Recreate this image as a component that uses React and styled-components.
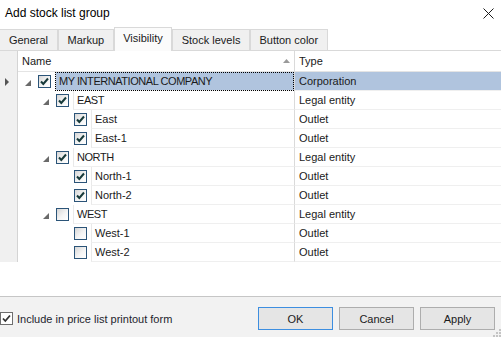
import React from "react";
import styled, { createGlobalStyle } from "styled-components";

const GlobalStyle = createGlobalStyle`
  html, body {
    margin: 0;
    padding: 0;
    background: #ffffff;
  }
  body {
    font-family: "Liberation Sans", Arial, sans-serif;
    font-size: 11px;
    color: #1a1a1a;
  }
`;

const rows = [
  { name: "MY INTERNATIONAL COMPANY", type: "Corporation", level: 0, checked: true, group: true, selected: true },
  { name: "EAST", type: "Legal entity", level: 1, checked: true, group: true },
  { name: "East", type: "Outlet", level: 2, checked: true },
  { name: "East-1", type: "Outlet", level: 2, checked: true },
  { name: "NORTH", type: "Legal entity", level: 1, checked: true, group: true },
  { name: "North-1", type: "Outlet", level: 2, checked: true },
  { name: "North-2", type: "Outlet", level: 2, checked: true },
  { name: "WEST", type: "Legal entity", level: 1, checked: false, group: true },
  { name: "West-1", type: "Outlet", level: 2, checked: false },
  { name: "West-2", type: "Outlet", level: 2, checked: false },
];

const tabs = ["General", "Markup", "Visibility", "Stock levels", "Button color"];

function CheckMark() {
  return (
    <svg width="11" height="11" viewBox="0 0 11 11">
      <path d="M2 5.5 L4.3 8 L9 2.5" fill="none" stroke="#173a3a" strokeWidth="2" />
    </svg>
  );
}

function TreeCheck({ checked }) {
  return <Box>{checked && <CheckMark />}</Box>;
}

export default function App() {
  return (
    <>
      <GlobalStyle />
      <Window>
        <TitleBar>
          <Title>Add stock list group</Title>
          <Close>
            <svg width="11" height="11" viewBox="0 0 11 11">
              <path d="M0.5 0.5 L10.5 10.5 M10.5 0.5 L0.5 10.5" stroke="#1a1a1a" strokeWidth="1" />
            </svg>
          </Close>
        </TitleBar>

        <TabStrip>
          {tabs.map((t) => (
            <Tab key={t} $active={t === "Visibility"}>{t}</Tab>
          ))}
        </TabStrip>

        <Grid>
          <HeaderRow>
            <Corner />
            <HeadCell>
              Name
              <SortArrow>
                <svg width="7" height="4" viewBox="0 0 7 4">
                  <polygon points="3.5,0 7,4 0,4" fill="#9a9a9a" />
                </svg>
              </SortArrow>
            </HeadCell>
            <HeadCell $sep>Type</HeadCell>
          </HeaderRow>

          {rows.map((r) => (
            <Row key={r.name}>
              <Indicator>
                {r.selected && (
                  <svg width="4" height="8" viewBox="0 0 4 8">
                    <polygon points="0,0 4,4 0,8" fill="#555" />
                  </svg>
                )}
              </Indicator>
              <NameCell $level={r.level}>
                <Expander>
                  {r.group && (
                    <svg width="6" height="6" viewBox="0 0 6 6">
                      <polygon points="6,0 6,6 0,6" fill="#6a6a6a" />
                    </svg>
                  )}
                </Expander>
                <TreeCheck checked={r.checked} />
                <NameText $selected={r.selected} $caps={r.group}>{r.name}</NameText>
              </NameCell>
              <TypeCell $selected={r.selected}>{r.type}</TypeCell>
            </Row>
          ))}
        </Grid>

        <Footer>
          <FooterCheck>
            <SmallBox>
              <svg width="11" height="11" viewBox="0 0 11 11">
                <path d="M2 5.5 L4.3 8 L9 2.5" fill="none" stroke="#333" strokeWidth="1.8" />
              </svg>
            </SmallBox>
            Include in price list printout form
          </FooterCheck>
          <Buttons>
            <Button $default>OK</Button>
            <Button>Cancel</Button>
            <Button>Apply</Button>
          </Buttons>
          <Grip>
            <svg width="8" height="8" viewBox="0 0 8 8">
              <rect x="6" y="0" width="2" height="2" fill="#c4c4c4" />
              <rect x="3" y="3" width="2" height="2" fill="#c4c4c4" />
              <rect x="6" y="3" width="2" height="2" fill="#c4c4c4" />
              <rect x="0" y="6" width="2" height="2" fill="#c4c4c4" />
              <rect x="3" y="6" width="2" height="2" fill="#c4c4c4" />
              <rect x="6" y="6" width="2" height="2" fill="#c4c4c4" />
            </svg>
          </Grip>
        </Footer>
      </Window>
    </>
  );
}

const Window = styled.div`
  width: 501px;
  height: 337px;
  display: flex;
  flex-direction: column;
  background: #fff;
  overflow: hidden;
  position: relative;
`;

const TitleBar = styled.div`
  height: 27px;
  flex: none;
  display: flex;
  align-items: center;
  justify-content: space-between;
  padding: 0 7px 2px 5px;
  box-sizing: border-box;
`;

const Title = styled.div`
  font-size: 12px;
  color: #000;
`;

const Close = styled.div`
  display: flex;
  align-items: center;
  margin-top: 1px;
`;

const TabStrip = styled.div`
  height: 24px;
  flex: none;
  display: flex;
  align-items: flex-end;
  border-bottom: 1px solid #d9d9d9;
  box-sizing: border-box;
`;

const Tab = styled.div`
  height: ${(p) => (p.$active ? "24px" : "21px")};
  margin-bottom: ${(p) => (p.$active ? "-1px" : "0")};
  box-sizing: border-box;
  padding: ${(p) => (p.$active ? "0 8.5px 3px" : "0 8.5px")};
  display: flex;
  align-items: center;
  border: 1px solid #d9d9d9;
  border-bottom: none;
  background: ${(p) => (p.$active ? "#fbfbfb" : "#f0f0f0")};
  color: #1a1a1a;
  white-space: nowrap;
  &:first-child {
    border-left: none;
    width: 58px;
    justify-content: center;
  }
`;

const Grid = styled.div`
  flex: 1;
  background: #fff;
`;

const HeaderRow = styled.div`
  display: grid;
  grid-template-columns: 18px 276px 1fr;
  height: 21px;
`;

const Corner = styled.div`
  background: #f0f0f0;
  border-right: 1px solid #d4d4d4;
`;

const HeadCell = styled.div`
  display: flex;
  align-items: center;
  justify-content: ${(p) => (p.$sep ? "flex-start" : "space-between")};
  padding: 0 4px;
  border-bottom: 1px solid #e4e4e4;
  border-left: ${(p) => (p.$sep ? "1px solid #dadada" : "none")};
  color: #1a1a1a;
`;

const SortArrow = styled.span`
  display: flex;
  margin-top: -1px;
`;

const Row = styled.div`
  display: grid;
  grid-template-columns: 18px 276px 1fr;
  height: 19px;
`;

const Indicator = styled.div`
  background: #f0f0f0;
  border-right: 1px solid #d4d4d4;
  display: flex;
  align-items: center;
  padding-left: 5px;
`;

const NameCell = styled.div`
  display: flex;
  align-items: center;
  padding-left: ${(p) => p.$level * 18}px;
  min-width: 0;
`;

const Expander = styled.div`
  width: 20px;
  height: 100%;
  flex: none;
  display: flex;
  align-items: center;
  padding: 3px 0 0 7px;
  box-sizing: border-box;
`;

const Box = styled.span`
  width: 13px;
  height: 13px;
  flex: none;
  box-sizing: border-box;
  border: 1px solid #2b5478;
  background: linear-gradient(135deg, #d6d6d6 0%, #f4f4f4 55%, #ffffff 100%);
  display: flex;
  align-items: center;
  justify-content: center;
`;

const NameText = styled.div`
  flex: 1;
  height: 100%;
  margin-left: 4px;
  box-sizing: border-box;
  display: flex;
  align-items: center;
  padding-left: 3px;
  white-space: nowrap;
  letter-spacing: ${(p) => (p.$caps ? "-0.45px" : "0")};
  border-left: 1px solid #e9e9e9;
  border-bottom: 1px solid #efefef;
  background: ${(p) => (p.$selected ? "#b0c4de" : "transparent")};
  outline: ${(p) => (p.$selected ? "1px dotted #000" : "none")};
  outline-offset: -1px;
`;

const TypeCell = styled.div`
  display: flex;
  align-items: center;
  padding-left: 4px;
  border-left: 1px solid #dadada;
  border-bottom: 1px solid #efefef;
  background: ${(p) => (p.$selected ? "#b0c4de" : "transparent")};
  color: #1a1a1a;
`;

const Footer = styled.div`
  height: 41px;
  flex: none;
  box-sizing: border-box;
  border-top: 1px solid #c6c6c6;
  background: #f2f2f2;
  display: flex;
  align-items: flex-start;
  justify-content: space-between;
  padding: 10px 6px 0 0;
  position: relative;
`;

const FooterCheck = styled.label`
  display: flex;
  align-items: center;
  gap: 4px;
  margin-top: 5px;
  color: #1e1e2e;
`;

const SmallBox = styled.span`
  width: 13px;
  height: 13px;
  box-sizing: border-box;
  border: 1px solid #6e6e6e;
  background: #fff;
  display: flex;
  align-items: center;
  justify-content: center;
`;

const Buttons = styled.div`
  display: flex;
  gap: 6px;
`;

const Button = styled.button`
  width: 75px;
  height: 23px;
  box-sizing: border-box;
  border: 1px solid ${(p) => (p.$default ? "#3d8ee0" : "#adadad")};
  background: #e5e5e5;
  font-family: "Liberation Sans", Arial, sans-serif;
  font-size: 11px;
  color: #1a1a1a;
  padding: 0;
`;

const Grip = styled.div`
  position: absolute;
  right: 0;
  bottom: 0;
  display: flex;
`;
